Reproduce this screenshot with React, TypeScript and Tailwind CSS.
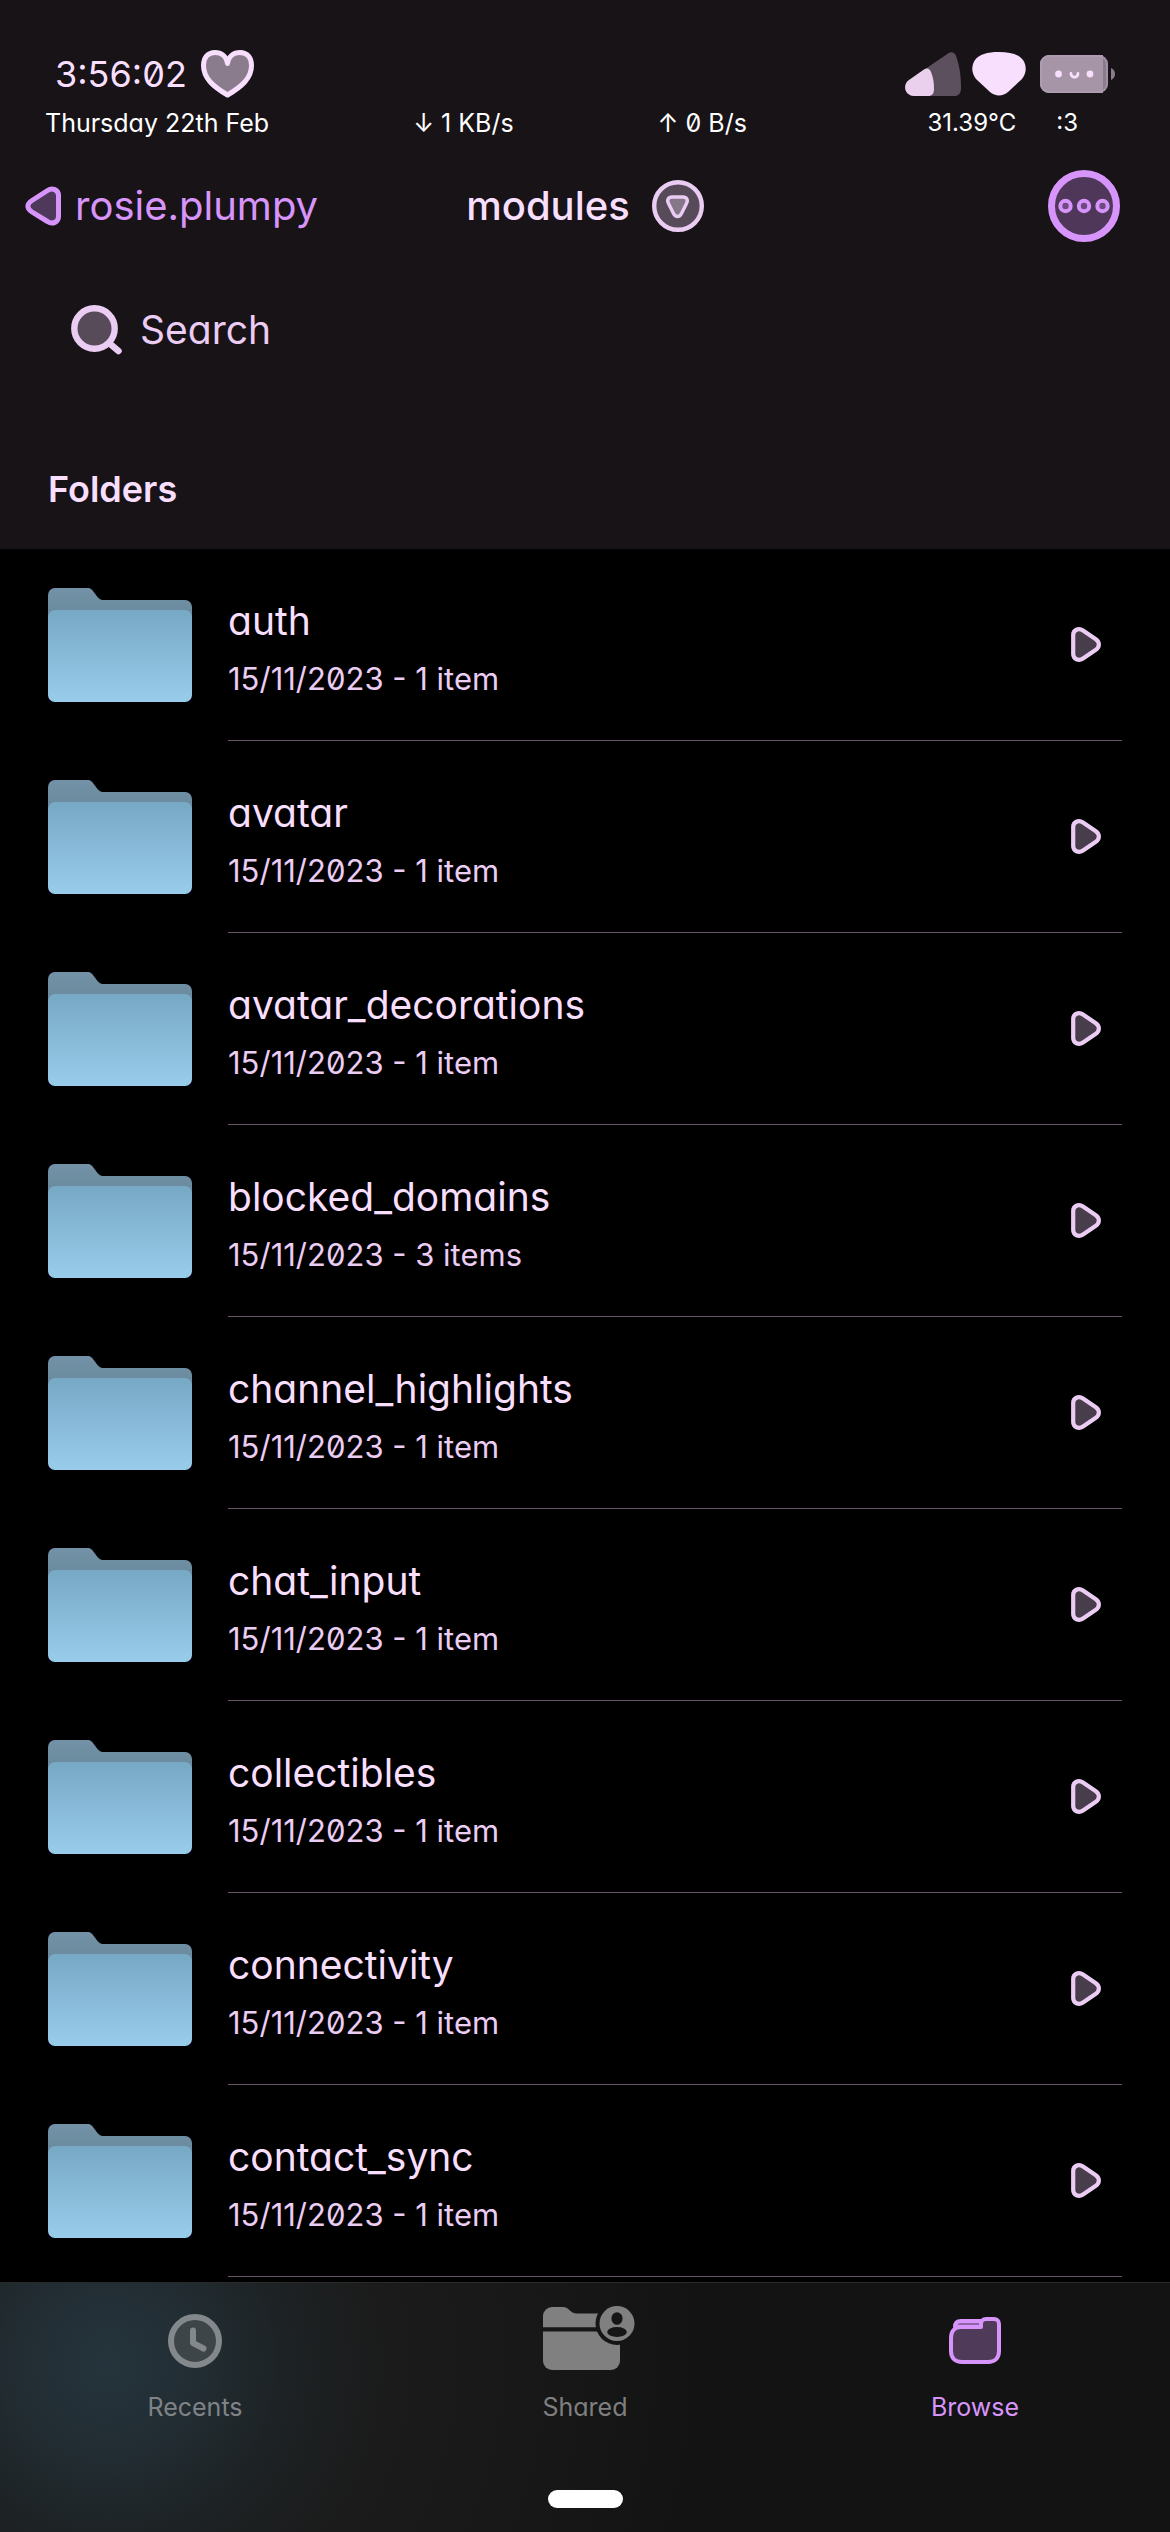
import React from "react";

type Folder = { name: string; date: string; count: string };

const folders: Folder[] = [
  { name: "auth", date: "15/11/2023", count: "1 item" },
  { name: "avatar", date: "15/11/2023", count: "1 item" },
  { name: "avatar_decorations", date: "15/11/2023", count: "1 item" },
  { name: "blocked_domains", date: "15/11/2023", count: "3 items" },
  { name: "channel_highlights", date: "15/11/2023", count: "1 item" },
  { name: "chat_input", date: "15/11/2023", count: "1 item" },
  { name: "collectibles", date: "15/11/2023", count: "1 item" },
  { name: "connectivity", date: "15/11/2023", count: "1 item" },
  { name: "contact_sync", date: "15/11/2023", count: "1 item" },
];

function HeartIcon() {
  return (
    <svg width="53" height="48" viewBox="0 0 53 48" aria-hidden="true">
      <path
        d="M26.5 13.5C25.5 6 20 2.5 14 2.5C6.500 2.500 2.500 8 2.500 15.500C2.500 28 12 36.500 26.500 45C41 36.500 50.500 28 50.500 15.500C50.500 8 46.500 2.500 39 2.500C33 2.500 27.500 6 26.500 13.500Z"
        fill="#8b7c8d"
        stroke="#f9dffe"
        strokeWidth="5"
        strokeLinejoin="round"
      />
    </svg>
  );
}

function SignalIcon() {
  return (
    <svg width="56" height="44" viewBox="0 0 56 44" aria-label="Signal" role="img">
      <path
        d="M4 28L43 1.500C46 -.5 49.500 0 51 4C54 12 56 22 56 36C56 41.500 53.500 44 49 44H9C0 44 -3 33 4 28Z"
        fill="#5c505e"
      />
      <path
        d="M4 28L19 17.500C22 15.500 24.500 16.500 26 20C28 25 29 30 29 37C29 41.500 27 44 23 44H9C0 44 -3 33 4 28Z"
        fill="#ead0ec"
      />
    </svg>
  );
}

function WifiIcon() {
  return (
    <svg width="54" height="44" viewBox="0 0 54 44" aria-label="Wi-Fi" role="img">
      <path
        d="M27 0C39 0 47 2.500 51 8C55 14 54.500 21 50 27L36 40C31 44.500 23 44.500 18 40L4 27C-.5 21 -1 14 3 8C7 2.500 15 0 27 0Z"
        fill="#f9dffe"
      />
    </svg>
  );
}

function BatteryIcon() {
  return (
    <svg width="75" height="38" viewBox="0 0 75 38" aria-label="Battery" role="img">
      <rect width="68" height="38" rx="9" fill="#8b7c8d" />
      <path d="M9 0H63V38H9A9 9 0 0 1 0 29V9A9 9 0 0 1 9 0Z" fill="#a595a7" />
      <rect x="1" y="1" width="66" height="36" rx="8" fill="none" stroke="#b5a2b8" strokeOpacity=".55" strokeWidth="2" />
      <path d="M71 13C73.500 14 75 16 75 19S73.500 24 71 25Z" fill="#8b7c8d" />
      <circle cx="18.500" cy="19" r="3.400" fill="#f9dffe" />
      <circle cx="50" cy="19" r="3.400" fill="#f9dffe" />
      <path d="M31 18.500C31 23.500 38 23.500 38 18.500" fill="none" stroke="#f9dffe" strokeWidth="2.800" strokeLinecap="round" />
    </svg>
  );
}

function BackIcon() {
  return (
    <svg width="36" height="40" viewBox="0 0 36 40" aria-hidden="true">
      <path
        d="M33.500 9.500C33.500 4 27.500 1 22.500 4.500L7 14.500C1.500 18 1.500 22.500 7 26L22.500 35.500C27.500 39 33.500 36 33.500 30.500Z"
        fill="#4f395a"
        stroke="#d795fb"
        strokeWidth="5"
        strokeLinejoin="round"
      />
    </svg>
  );
}

function DropdownIcon() {
  return (
    <svg width="52" height="52" viewBox="0 0 52 52" aria-hidden="true">
      <circle cx="26" cy="26" r="23.800" fill="#574b59" stroke="#ebccf3" strokeWidth="4.400" />
      <path
        d="M20 17H31C34.500 17 36.500 20 34.500 23.500L29.500 33.500C27.500 37.500 23.500 37.500 21.500 33.500L16.500 23.500C14.500 20 16.500 17 20 17Z"
        fill="#86768a"
        stroke="#ebccf3"
        strokeWidth="3.400"
      />
    </svg>
  );
}

function MoreIcon() {
  return (
    <svg width="72" height="72" viewBox="0 0 72 72" aria-hidden="true">
      <circle cx="36" cy="36" r="32.500" fill="#4f3759" stroke="#d795fb" strokeWidth="7" />
      {[17.5, 36, 54.5].map((x) => (
        <circle key={x} cx={x} cy="36" r="5.200" fill="#6e4a80" stroke="#d795fb" strokeWidth="4" />
      ))}
    </svg>
  );
}

function SearchIcon() {
  return (
    <svg width="51" height="50" viewBox="0 0 51 50" aria-hidden="true">
      <path d="M38 38L47.500 46" stroke="#ebccf3" strokeWidth="6.500" strokeLinecap="round" />
      <circle cx="23.500" cy="23.500" r="20.200" fill="#574b59" stroke="#ebccf3" strokeWidth="6.400" />
    </svg>
  );
}

function FolderIcon() {
  return (
    <svg width="144" height="114" viewBox="0 0 144 114" className="shrink-0" aria-hidden="true">
      <defs>
        <linearGradient id="folder-front" x1="0" y1="0" x2="0" y2="1">
          <stop offset="0" stopColor="#77a9c7" />
          <stop offset="1" stopColor="#99cbea" />
        </linearGradient>
        <linearGradient id="folder-back" x1="0" y1="0" x2="0" y2="1">
          <stop offset="0" stopColor="#7392a7" />
          <stop offset="1" stopColor="#67879a" />
        </linearGradient>
      </defs>
      <path
        d="M7 0H39C43 0 44.500 2 46.500 5L49.500 9C51.500 11.500 53.500 12 56.500 12H137A7 7 0 0 1 144 19V34H0V7A7 7 0 0 1 7 0Z"
        fill="url(#folder-back)"
      />
      <rect y="22" width="144" height="92" rx="7" fill="url(#folder-front)" />
    </svg>
  );
}

function RowArrow() {
  return (
    <svg width="30" height="35" viewBox="0 0 30 35" className="shrink-0" aria-hidden="true">
      <path
        d="M2.200 8C2.200 3 7.500 .5 12 3.500L24.500 12C29 15 29 20 24.500 23L12 31.500C7.500 34.500 2.200 32 2.200 27Z"
        fill="#483e4b"
        stroke="#ebccf3"
        strokeWidth="4.200"
      />
    </svg>
  );
}

function RecentsIcon() {
  return (
    <svg width="72" height="72" viewBox="-9 -9 72 72" aria-hidden="true">
      <circle cx="27" cy="27" r="24" fill="#3e4548" stroke="#82888b" strokeWidth="6" />
      <path d="M25 16.500V29L35.500 34.500" fill="none" stroke="#82888b" strokeWidth="6" strokeLinecap="round" strokeLinejoin="round" />
    </svg>
  );
}

function SharedIcon() {
  return (
    <svg width="102" height="72" viewBox="-9 -1 102 72" aria-hidden="true">
      <mask id="shared-cut" maskUnits="userSpaceOnUse" x="-9" y="-1" width="102" height="72">
        <rect x="-9" y="-1" width="102" height="72" fill="white" />
        <circle cx="74" cy="17.500" r="21.500" fill="black" />
      </mask>
      <mask id="person-cut" maskUnits="userSpaceOnUse" x="50" y="-1" width="48" height="48">
        <rect x="50" y="-1" width="48" height="48" fill="white" />
        <ellipse cx="74" cy="12.500" rx="5.600" ry="6.300" fill="black" />
        <ellipse cx="74" cy="26" rx="9.800" ry="5" fill="black" />
      </mask>
      <g fill="#808080" mask="url(#shared-cut)">
        <path d="M9 1H20C26 1 27 7.500 34 7.500H77V21.300H0V10A9 9 0 0 1 9 1Z" />
        <path d="M0 25.500H77V55A9 9 0 0 1 68 64H9A9 9 0 0 1 0 55Z" />
      </g>
      <circle cx="74" cy="17.500" r="17.500" fill="#808080" mask="url(#person-cut)" />
    </svg>
  );
}

function BrowseIcon() {
  return (
    <svg width="72" height="72" viewBox="-10 -12 72 72" aria-hidden="true">
      <g stroke="#d795fb" strokeWidth="4" strokeLinejoin="round">
        <path d="M6 10C6 6 8 4 12 4H32V10Z" fill="#8f64a6" />
        <path
          d="M32 10H12C5 10 2 15 2 21V34C2 41 6 45 13 45H39C46 45 50 41 50 34V7C50 4 48 2 45 2H37C34 2 32 4 32 7Z"
          fill="#4f3a59"
        />
      </g>
    </svg>
  );
}

function StatusBar() {
  return (
    <div className="pt-12">
      <div className="flex h-[52px] items-center justify-between pl-[55px] pr-[55px]">
        <div className="flex items-center gap-[14px]">
          <time className="text-[36px] leading-[52px] text-[#f9dffe]">3:56:02</time>
          <HeartIcon />
        </div>
        <div className="flex items-center">
          <SignalIcon />
          <span className="ml-[11px]">
            <WifiIcon />
          </span>
          <span className="ml-[14px]">
            <BatteryIcon />
          </span>
        </div>
      </div>
      <div className="mt-[7px] flex items-center justify-between pl-[45px] pr-[92px] leading-8 text-white">
        <div className="flex gap-36 text-[25px]">
          <span>Thursday 22th Feb</span>
          <span>↓ 1 KB/s</span>
          <span>↑ 0 B/s</span>
        </div>
        <div className="flex gap-10 text-[24px]">
          <span>31.39°C</span>
          <span>:3</span>
        </div>
      </div>
    </div>
  );
}

function Header() {
  return (
    <header className="bg-[#171317]">
      <StatusBar />
      <div className="mt-[31px] grid h-[72px] grid-cols-[1fr_auto_1fr] items-center pl-[25px] pr-[50px]">
        <button type="button" className="flex items-center gap-[14px] text-[40px] leading-[48px] text-[#d795fb]">
          <BackIcon />
          rosie.plumpy
        </button>
        <button type="button" className="ml-[25px] flex items-center gap-[22px] text-[40px] font-medium leading-[48px] text-[#f9dffe]">
          modules
          <DropdownIcon />
        </button>
        <button type="button" aria-label="More options" className="justify-self-end">
          <MoreIcon />
        </button>
      </div>
      <label className="mx-[50px] mt-[52px] flex h-[72px] items-center gap-[18px] pl-[21px]">
        <SearchIcon />
        <input
          type="text"
          aria-label="Search"
          placeholder="Search"
          className="min-w-0 flex-1 bg-transparent text-[39px] leading-[48px] text-[#f9dffe] outline-none placeholder:text-[#ebccf3]"
        />
      </label>
      <h2 className="px-12 pb-9 pt-[99px] text-[36px] font-semibold leading-[48px] text-[#f9dffe]">Folders</h2>
    </header>
  );
}

function FolderRow({ folder }: { folder: Folder }) {
  return (
    <li>
      <button type="button" className="flex h-48 w-full items-center gap-9 px-12 text-left">
        <FolderIcon />
        <span className="flex h-full min-w-0 flex-1 items-center justify-between border-b border-[#665566] pr-[21px]">
          <span className="flex min-w-0 flex-col gap-4 pt-1">
            <span className="text-[39px] leading-[48px] text-[#f9dffe]">{folder.name}</span>
            <span className="text-[31px] leading-9 text-[#ebccf3]">
              {folder.date} - {folder.count}
            </span>
          </span>
          <RowArrow />
        </span>
      </button>
    </li>
  );
}

function TabBar() {
  return (
    <nav className="border-t border-[#2a2a2b] bg-[#131313] bg-[radial-gradient(circle_at_108px_80px,#25343c_0,#222d33_90px,#1d2224_180px,#1b1b1b_280px,#181818_420px,#131313_600px)]">
      <div className="grid grid-cols-3 pt-[22px] text-[25px] leading-8 text-[#808385]">
        <button type="button" className="flex flex-col items-center gap-[14px]">
          <RecentsIcon />
          Recents
        </button>
        <button type="button" className="flex flex-col items-center gap-[14px] text-[#7f7f7f]">
          <SharedIcon />
          Shared
        </button>
        <button type="button" aria-current="page" className="flex flex-col items-center gap-[14px] text-[#d795fb]">
          <BrowseIcon />
          Browse
        </button>
      </div>
      <div className="mx-auto mb-6 mt-[67px] h-[18px] w-[75px] rounded-full bg-white" />
    </nav>
  );
}

export default function App() {
  return (
    <div className="flex min-h-screen flex-col bg-black font-['Inter','Noto_Sans',sans-serif] [font-feature-settings:'zero','cv11','ss03']">
      <Header />
      <main className="flex-1 pb-[5px]">
        <ul>
          {folders.map((folder) => (
            <FolderRow key={folder.name} folder={folder} />
          ))}
        </ul>
      </main>
      <TabBar />
    </div>
  );
}
